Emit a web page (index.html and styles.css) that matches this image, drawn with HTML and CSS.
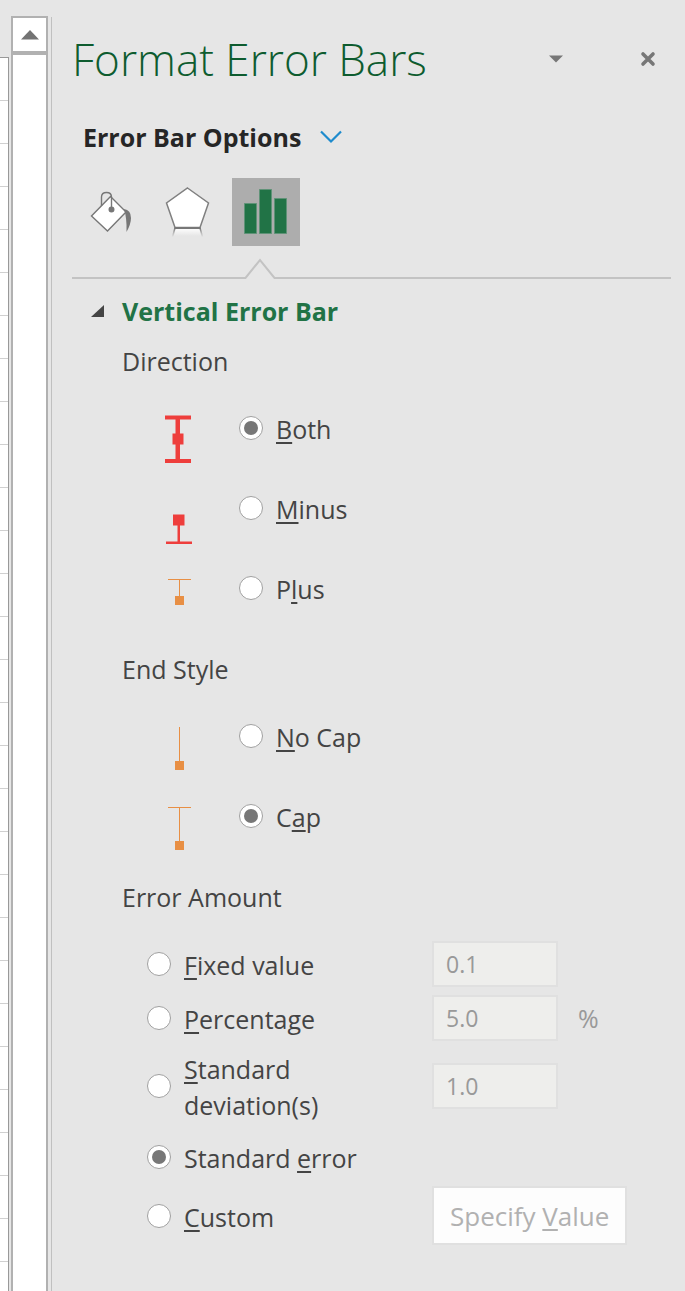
FILE: index.html
```html
<!DOCTYPE html>
<html lang="en">
<head>
    <meta charset="UTF-8">
    <meta name="viewport" content="width=device-width, initial-scale=1.0">
    <title>Format Error Bars</title>
    <link rel="stylesheet" href="styles.css">
</head>
<body>
    <div class="sheet"></div>

    <div class="scrollbar">
        <button type="button" class="scroll-up" aria-label="Scroll up">
            <svg width="18" height="10" viewBox="0 0 18 10"><path d="M9 0L18 9.5H0z" fill="#737373"/></svg>
        </button>
    </div>

    <main class="pane">
        <header class="pane-header">
            <h1>Format Error Bars</h1>
            <button type="button" class="icon-button" aria-label="Pane options">
                <svg width="14" height="8" viewBox="0 0 14 8"><path d="M0 0.5H14L7 7.5z" fill="#777"/></svg>
            </button>
            <button type="button" class="icon-button" aria-label="Close">
                <svg width="16" height="16" viewBox="0 0 16 16"><path d="M3 3L13 13M13 3L3 13" stroke="#777" stroke-width="3.6" stroke-linecap="round"/></svg>
            </button>
        </header>

        <button type="button" class="options-menu">
            Error Bar Options
            <svg width="24" height="16" viewBox="0 0 24 16"><path d="M2 2.5L12 12.5L22 2.5" fill="none" stroke="#1e8bcd" stroke-width="2.2"/></svg>
        </button>

        <nav class="tabs">
            <button type="button" class="tab" aria-label="Fill and line">
                <svg width="68" height="68" viewBox="0 0 68 68" fill="none" stroke="#777" stroke-width="1.4">
                    <path d="M30.500 18.500L46 34L27.500 53L11.500 38z" fill="#fff"/>
                    <path d="M21.500 28V19Q21.500 14.500 26.500 14.500Q31.500 14.500 31.500 19V31"/>
                    <circle cx="31.500" cy="31.500" r="2.300" fill="#777"/>
                    <path d="M44 31Q51 32 51 40Q51 46 46.500 54Q47 40 44 31z" fill="#777" stroke="none"/>
                </svg>
            </button>
            <button type="button" class="tab" aria-label="Effects">
                <svg width="68" height="68" viewBox="0 0 68 68" fill="none">
                    <defs>
                        <linearGradient id="fade" x1="0" y1="0" x2="0" y2="1">
                            <stop offset="0" stop-color="#fff"/>
                            <stop offset="1" stop-color="#fff" stop-opacity="0"/>
                        </linearGradient>
                        <linearGradient id="fade-line" gradientUnits="userSpaceOnUse" x1="0" y1="50" x2="0" y2="59">
                            <stop offset="0" stop-color="#777"/>
                            <stop offset="1" stop-color="#777" stop-opacity="0"/>
                        </linearGradient>
                    </defs>
                    <path d="M19 50H44L47 58H16z" fill="url(#fade)"/>
                    <path d="M19 50L16.500 59M44 50L46.500 59" stroke="url(#fade-line)" stroke-width="1.500"/>
                    <path d="M31.500 10L52.500 25L44 49.500H19L10.500 25z" fill="#fff" stroke="#808080" stroke-width="1.500"/>
                    <path d="M18.500 50H44.500" stroke="#777" stroke-width="2"/>
                </svg>
            </button>
            <button type="button" class="tab active" aria-label="Error bar options">
                <svg width="68" height="68" viewBox="0 0 68 68" fill="#217346" stroke="#5f9277" stroke-width="1">
                    <path d="M12.500 25.500H24.500V55.500H12.500zM27.500 11.500H39.500V55.500H27.500zM42.500 20.500H54.500V55.500H42.500z"/>
                </svg>
            </button>
        </nav>

        <div class="divider">
            <svg class="notch" width="32" height="22" viewBox="0 0 32 22"><path d="M0 20H2L16 2L30 20H32V22H0z" fill="#e6e6e6"/><path d="M0 21H1.500L16 3L30.500 21H32" fill="none" stroke="#c3c3c3" stroke-width="2"/></svg>
        </div>

        <h2>
            <svg class="expander" width="13" height="12" viewBox="0 0 13 12"><path d="M13 0V12H0z" fill="#444"/></svg>
            Vertical Error Bar
        </h2>

        <form class="options">
            <fieldset>
                <legend>Direction</legend>
                <div class="choice">
                    <svg width="28" height="80" viewBox="0 0 28 80" fill="#ee3e3c">
                        <path d="M1 27.500H27V31.500H14.500V71H27V75H1V71H11.500V31.500H1z"/>
                        <path d="M12 29H16V72H12zM8.500 45.500H19.500V56.500H8.500z"/>
                    </svg>
                    <input type="radio" name="direction" id="both" checked>
                    <label for="both"><u>B</u>oth</label>
                </div>
                <div class="choice">
                    <svg width="28" height="80" viewBox="0 0 28 80" fill="#ee3e3c">
                        <path d="M9 46.500H20.500V57.500H16V73.500H28V76H2V73.500H13.500V57.500H9z"/>
                    </svg>
                    <input type="radio" name="direction" id="minus">
                    <label for="minus"><u>M</u>inus</label>
                </div>
                <div class="choice">
                    <svg width="28" height="80" viewBox="0 0 28 80" fill="#e88f44">
                        <path d="M4 31H27V32H16V48H20V57H11V48H15V32H4z"/>
                    </svg>
                    <input type="radio" name="direction" id="plus">
                    <label for="plus">P<u>l</u>us</label>
                </div>
            </fieldset>

            <fieldset>
                <legend>End Style</legend>
                <div class="choice">
                    <svg width="28" height="80" viewBox="0 0 28 80" fill="#e88f44">
                        <path d="M15 31H16V65H20V74H11V65H15z"/>
                    </svg>
                    <input type="radio" name="end-style" id="no-cap">
                    <label for="no-cap"><u>N</u>o Cap</label>
                </div>
                <div class="choice">
                    <svg width="28" height="80" viewBox="0 0 28 80" fill="#e88f44">
                        <path d="M4 31H27V32H16V65H20V74H11V65H15V32H4z"/>
                    </svg>
                    <input type="radio" name="end-style" id="cap" checked>
                    <label for="cap">C<u>a</u>p</label>
                </div>
            </fieldset>

            <fieldset>
                <legend>Error Amount</legend>
                <div class="amounts">
                    <div class="amount">
                        <input type="radio" name="amount" id="fixed">
                        <label for="fixed"><u>F</u>ixed value</label>
                        <input type="text" value="0.1" aria-label="Fixed value amount" disabled>
                    </div>
                    <div class="amount">
                        <input type="radio" name="amount" id="percentage">
                        <label for="percentage"><u>P</u>ercentage</label>
                        <input type="text" value="5.0" aria-label="Percentage amount" disabled>
                        <span class="unit">%</span>
                    </div>
                    <div class="amount tall">
                        <input type="radio" name="amount" id="deviation">
                        <label for="deviation"><u>S</u>tandard deviation(s)</label>
                        <input type="text" value="1.0" aria-label="Standard deviations amount" disabled>
                    </div>
                    <div class="amount">
                        <input type="radio" name="amount" id="std-error" checked>
                        <label for="std-error">Standard <u>e</u>rror</label>
                    </div>
                    <div class="amount">
                        <input type="radio" name="amount" id="custom">
                        <label for="custom"><u>C</u>ustom</label>
                        <button type="button" class="specify" disabled>Specify <u>V</u>alue</button>
                    </div>
                </div>
            </fieldset>
        </form>
    </main>
</body>
</html>
```

FILE: styles.css
```css
:root {
    --bg: #e6e6e6;
    --text: #444;
    --green: #217346;
    --border: #b1b1b1;
}

* {
    box-sizing: border-box;
}

body {
    display: flex;
    margin: 0;
    min-height: 100vh;
    background: var(--bg);
    color: var(--text);
    font-family: 'Segoe UI', 'Open Sans', 'Noto Sans', sans-serif;
    font-size: 25px;
    line-height: 36px;
}

button {
    padding: 0;
    border: none;
    background: none;
    color: inherit;
    font: inherit;
}

svg {
    display: block;
    flex: none;
}

u {
    text-decoration-thickness: 2px;
    text-underline-offset: 3px;
    text-decoration-skip-ink: none;
}

/* edge of the worksheet */
.sheet {
    width: 9px;
    flex: none;
    margin: 57px 2px 0 0;
    border-top: 1px solid #999;
    border-right: 1px solid #999;
    background: repeating-linear-gradient(#fff 0 42px, #d0d0d0 42px 43px);
}

.scrollbar {
    width: 37px;
    flex: none;
    margin-top: 16px;
    border: 2px solid var(--border);
    border-bottom: none;
    background: #fff;
}

.scroll-up {
    display: flex;
    align-items: center;
    justify-content: center;
    width: 100%;
    height: 37px;
    border-bottom: 4px solid var(--border);
}

.pane {
    flex: 1;
    min-width: 0;
    margin: 17px 0 0 3px;
    padding: 12px 14px 40px 20px;
    border-left: 1px solid #c0c0c0;
}

.pane-header {
    display: flex;
    align-items: center;
    height: 60px;
}

h1 {
    flex: 1;
    margin: 0;
    color: #0e5c2f;
    font-size: 44px;
    font-weight: 350;
    line-height: 60px;
}

.icon-button {
    display: flex;
    align-items: center;
    justify-content: center;
    width: 46px;
    height: 46px;
}

.icon-button + .icon-button {
    margin-left: 46px;
}

.options-menu {
    display: flex;
    align-items: center;
    gap: 18px;
    margin: 30px 0 0 11px;
    color: #262626;
    font-weight: 700;
}

.tabs {
    display: flex;
    gap: 8px;
    margin: 23px 0 0 8px;
}

.tab {
    width: 68px;
    height: 68px;
}

.tab.active {
    background: #adadad;
}

.divider {
    position: relative;
    height: 33px;
    border-bottom: 2px solid #c3c3c3;
}

/* pointer that sits over the rule, below the active tab */
.notch {
    position: absolute;
    left: 172px;
    bottom: -2px;
}

h2 {
    display: flex;
    align-items: center;
    gap: 18px;
    height: 50px;
    margin: 7px 0 0 19px;
    color: var(--green);
    font-size: 25px;
    font-weight: 700;
}

.options {
    margin-left: 50px;
}

fieldset {
    margin: 0 0 16px;
    padding: 0;
    border: none;
    min-width: 0;
}

legend {
    padding: 7px 0 9px;
}

label {
    padding-top: 2px;
}

.choice {
    display: flex;
    align-items: center;
    height: 80px;
    padding-left: 42px;
}

input[type="radio"] {
    appearance: none;
    display: grid;
    place-items: center;
    flex: none;
    width: 24px;
    height: 24px;
    margin: 0 13px 0 0;
    border: 1px solid #a0a0a0;
    border-radius: 50%;
    background: #fff;
}

.choice input[type="radio"] {
    margin-left: 47px;
}

input[type="radio"]:checked::before {
    content: '';
    width: 14px;
    height: 14px;
    border-radius: 50%;
    background: #777;
}

.amounts {
    padding: 13px 0 0 25px;
}

.amount {
    display: grid;
    grid-template-columns: 37px 248px auto 1fr;
    align-items: center;
    justify-items: start;
    min-height: 54px;
}

.amount.tall {
    min-height: 82px;
}

.amount.tall ~ .amount {
    min-height: 59px;
}

.amount label {
    max-width: 200px;
}

.amount input[type="text"] {
    width: 126px;
    height: 46px;
    padding: 0 12px;
    border: 2px solid #e0e0e0;
    background: #eeeeec;
    color: #999;
    font-family: inherit;
    font-size: 23px;
}

.unit {
    margin-left: 20px;
    color: #999;
}

.specify {
    height: 59px;
    padding: 0 16px;
    border: 2px solid #e0e0e0;
    background: #fdfdfd;
    color: #b1b1b1;
    font-size: 26px;
}
```
